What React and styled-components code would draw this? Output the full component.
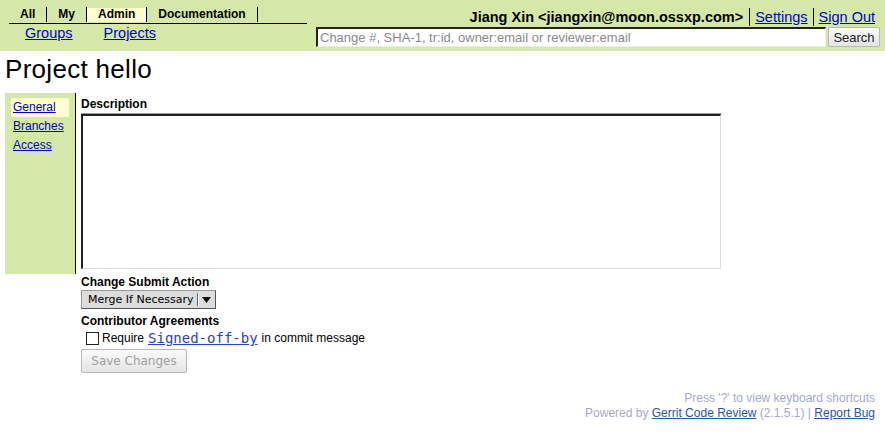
import React from 'react';
import styled, { createGlobalStyle } from 'styled-components';

const GlobalStyle = createGlobalStyle`
  body {
    margin: 0;
    background: #fff;
    font-family: 'Liberation Sans', Arial, sans-serif;
    font-size: 12px;
    color: #000;
  }
`;

const TopBar = styled.header`
  background: #d4e9a9;
  height: 51px;
  display: flex;
  justify-content: space-between;
`;

const MenuColumn = styled.div`
  padding-left: 9px;
  padding-top: 7px;
`;

const TabRow = styled.ul`
  display: flex;
  list-style: none;
  margin: 0;
  padding: 0 0 1px;
  width: 298px;
  border-bottom: 1px solid #000;
`;

const Tab = styled.li`
  height: 15px;
  line-height: 15px;
  padding: 0 11px;
  border-right: 1px solid #000;
  font-weight: bold;
  font-size: 12px;
  background: ${p => p.$active ? '#ffffcc' : 'transparent'};
  box-shadow: ${p => p.$active ? 'inset 0 1px 0 #d4e9a9' : 'none'};
`;

const SubMenu = styled.div`
  display: flex;
  gap: 31px;
  padding-left: 16px;
  padding-top: 1px;
`;

const MenuLink = styled.a`
  color: #0000cc;
  font-size: 14.5px;
  text-decoration: underline;
  line-height: 17px;
`;

const RightColumn = styled.div`
  display: flex;
  flex-direction: column;
  align-items: flex-end;
  padding-top: 7px;
`;

const UserRow = styled.div`
  display: flex;
  align-items: center;
  padding-right: 10px;
  font-size: 14.5px;
  line-height: 18px;
  height: 19px;
`;

const UserName = styled.span`
  font-weight: bold;
  padding-right: 6px;
  border-right: 1px solid #000;
`;

const UserLink = styled.a`
  color: #0000cc;
  text-decoration: underline;
  padding: 0 ${p => p.$last ? '0' : '5px'} 0 5px;
  border-right: ${p => p.$last ? 'none' : '1px solid #000'};
`;

const SearchRow = styled.form`
  display: flex;
  gap: 2px;
  padding-right: 5px;
  margin-top: 1px;
`;

const SearchInput = styled.input`
  box-sizing: border-box;
  width: 510px;
  height: 20px;
  border-width: 2px 1px 1px 2px;
  border-style: solid;
  border-color: #222 #eee #eee #222;
  background: #fff;
  font-family: 'Liberation Sans', Arial, sans-serif;
  font-size: 13px;
  padding: 0 2px;
  &::placeholder { color: #8a8a8a; }
`;

const Button = styled.button`
  box-sizing: border-box;
  height: ${p => p.$tall ? '24px' : '20px'};
  width: ${p => p.$tall ? '106px' : '52px'};
  padding: 0;
  font-family: ${p => p.$tall ? "'DejaVu Sans', sans-serif" : "'Liberation Sans', Arial, sans-serif"};
  font-size: ${p => p.$tall ? '12px' : '13px'};
  color: ${p => p.disabled ? '#a0a0a0' : '#222'};
  background: linear-gradient(#fbfbfb, #e4e4e4);
  border: 1px solid #b8b8b8;
  border-radius: 2px;
`;

const Title = styled.h1`
  margin: 0;
  padding: 4px 5px 9px;
  font-size: 26px;
  letter-spacing: 0.3px;
  font-weight: normal;
  line-height: 29px;
`;

const Body = styled.div`
  display: flex;
  padding-left: 5px;
`;

const SideNav = styled.nav`
  width: 71px;
  height: 181px;
  background: #d4e9a9;
  border-right: 1px solid #000;
  padding-top: 5px;
  box-sizing: border-box;
`;

const SideItem = styled.a`
  display: block;
  margin-left: 6px;
  width: 58px;
  box-sizing: border-box;
  padding-left: 2px;
  height: 19px;
  line-height: 19px;
  color: #0000cc;
  text-decoration: underline;
  font-size: 12px;
  background: ${p => p.$active ? '#ffffcc' : 'transparent'};
`;

const Content = styled.div`
  padding-left: 5px;
  padding-top: 4px;
`;

const Label = styled.div`
  font-weight: bold;
  font-size: 12px;
  line-height: 14px;
  margin-top: ${p => p.$gap || 0}px;
`;

const Description = styled.textarea`
  display: block;
  box-sizing: border-box;
  width: 640px;
  height: 155px;
  margin-top: 3px;
  border-width: 2px 1px 1px 2px;
  border-style: solid;
  border-color: #222 #ddd #ddd #222;
  box-shadow: 0 -1px 0 #999;
  resize: none;
`;

const SelectBox = styled.div`
  display: inline-flex;
  align-items: center;
  box-sizing: border-box;
  height: 19px;
  margin-top: 1px;
  background: #dcdcdc;
  border: 1px solid #9a9a9a;
  border-right-color: #555;
  border-bottom-color: #555;
  font-family: 'DejaVu Sans', sans-serif;
  font-size: 11px;
`;

const SelectText = styled.span`
  padding: 0 3px 0 6px;
  border-right: 1px solid #666;
  box-shadow: 1px 0 0 #fff;
  line-height: 13px;
`;

const SelectArrow = styled.span`
  display: flex;
  align-items: center;
  padding: 0 4px 0 4px;
`;

const CheckRow = styled.label`
  display: flex;
  align-items: center;
  margin-top: 2px;
  padding-left: 5px;
  height: 16px;
  font-size: 12px;
`;

const Check = styled.input`
  appearance: none;
  width: 13px;
  height: 13px;
  margin: 0 3px 0 0;
  border: 1px solid #222;
  background: #fff;
  box-sizing: border-box;
`;

const CodeLink = styled.a`
  font-family: 'DejaVu Sans Mono', monospace;
  font-size: 14px;
  color: #2244cc;
  text-decoration: underline;
  margin: 0 4px;
`;

const SaveWrap = styled.div`
  margin-top: 3px;
`;

const Footer = styled.footer`
  text-align: right;
  padding: 18px 10px 0 0;
  font-size: 12px;
  line-height: 15px;
  color: #a3abc9;
`;

const FooterLink = styled.a`
  color: #2a55a8;
  text-decoration: underline;
`;

export default function App() {
  return (
    <>
      <GlobalStyle />
      <TopBar>
        <MenuColumn>
          <TabRow>
            <Tab>All</Tab>
            <Tab>My</Tab>
            <Tab $active>Admin</Tab>
            <Tab>Documentation</Tab>
          </TabRow>
          <SubMenu>
            <MenuLink href="#">Groups</MenuLink>
            <MenuLink href="#">Projects</MenuLink>
          </SubMenu>
        </MenuColumn>
        <RightColumn>
          <UserRow>
            <UserName>Jiang Xin &lt;jiangxin@moon.ossxp.com&gt;</UserName>
            <UserLink href="#">Settings</UserLink>
            <UserLink href="#" $last>Sign Out</UserLink>
          </UserRow>
          <SearchRow onSubmit={e => e.preventDefault()}>
            <SearchInput placeholder="Change #, SHA-1, tr:id, owner:email or reviewer:email" />
            <Button type="submit">Search</Button>
          </SearchRow>
        </RightColumn>
      </TopBar>

      <Title>Project hello</Title>

      <Body>
        <SideNav>
          <SideItem href="#" $active>General</SideItem>
          <SideItem href="#">Branches</SideItem>
          <SideItem href="#">Access</SideItem>
        </SideNav>
        <Content>
          <Label>Description</Label>
          <Description />
          <Label $gap={6}>Change Submit Action</Label>
          <SelectBox>
            <SelectText>Merge If Necessary</SelectText>
            <SelectArrow>
              <svg width="9" height="6" viewBox="0 0 9 6">
                <path d="M0 0h9L4.5 6z" fill="#111" />
              </svg>
            </SelectArrow>
          </SelectBox>
          <Label $gap={5}>Contributor Agreements</Label>
          <CheckRow>
            <Check type="checkbox" />
            Require<CodeLink href="#">Signed-off-by</CodeLink>in commit message
          </CheckRow>
          <SaveWrap>
            <Button $tall disabled>Save Changes</Button>
          </SaveWrap>
        </Content>
      </Body>

      <Footer>
        <div>Press '?' to view keyboard shortcuts</div>
        <div>
          Powered by <FooterLink href="#">Gerrit Code Review</FooterLink> (2.1.5.1) | <FooterLink href="#">Report Bug</FooterLink>
        </div>
      </Footer>
    </>
  );
}
